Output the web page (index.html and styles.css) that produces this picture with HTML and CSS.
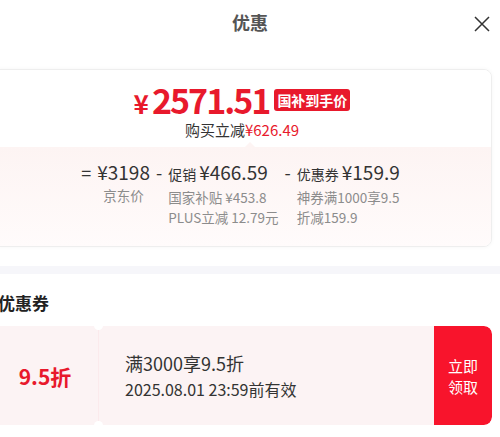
FILE: index.html
```html
<!DOCTYPE html>
<html lang="zh-CN">
<head>
    <meta charset="UTF-8">
    <title>优惠</title>
    <link rel="stylesheet" href="styles.css">
</head>
<body>
    <div class="header">
        <h1 class="title">优惠</h1>
        <span class="close">
            <svg width="18" height="18" viewBox="0 0 18 18"><path d="M2 2L16 16M16 2L2 16" stroke="#333" stroke-width="1.5" fill="none"/></svg>
        </span>
    </div>

    <div class="content">
        <div class="card">
            <div class="card-top">
                <div class="price-line">
                    <span class="price"><span class="yen">¥</span>2571.51</span>
                    <span class="tag">国补到手价</span>
                </div>
                <div class="save">购买立减<span class="red">¥626.49</span></div>
            </div>
            <div class="card-bottom">
                <div class="calc">
                    <span class="op">=</span>
                    <div class="col col-center">
                        <div class="main">¥3198</div>
                        <div class="sub">京东价</div>
                    </div>
                    <span class="op">-</span>
                    <div class="col">
                        <div class="main"><span class="label">促销</span>¥466.59</div>
                        <div class="sub">国家补贴 ¥453.8</div>
                        <div class="sub">PLUS立减 12.79元</div>
                    </div>
                    <span class="op">-</span>
                    <div class="col">
                        <div class="main"><span class="label">优惠券</span>¥159.9</div>
                        <div class="sub">神券满1000享9.5</div>
                        <div class="sub">折减159.9</div>
                    </div>
                </div>
            </div>
        </div>
    </div>

    <div class="divider"></div>

    <div class="content">
        <h2 class="section-title">优惠券</h2>
        <div class="coupon">
            <div class="coupon-value">9.5折</div>
            <div class="coupon-info">
                <div class="coupon-name">满3000享9.5折</div>
                <div class="coupon-date">2025.08.01 23:59前有效</div>
            </div>
            <button class="coupon-btn">立即<br>领取</button>
        </div>
    </div>
</body>
</html>
```

FILE: styles.css
```css
/*--base-------------------------------------------------------------*/
html, body {
    margin: 0;
    padding: 0;
    background: #fff;
}
body {
    width: 500px;
    overflow: hidden;
    font-family: "Noto Sans CJK SC", "Noto Sans", sans-serif;
    color: #333;
}

.header {
    position: relative;
    height: 44px;
    display: flex;
    align-items: center;
    justify-content: center;
}
.title {
    margin: 0;
    font-size: 18px;
    font-weight: 700;
    color: #555;
}
.close {
    position: absolute;
    right: 9px;
    top: 15px;
    display: flex;
}

.content {
    margin: 0 8px 0 -8px;
}

/*--price card-------------------------------------------------------*/
.card {
    margin-top: 25px;
    border: 1px solid #eee;
    border-radius: 8px;
    overflow: hidden;
    box-shadow: 0 0 4px rgba(0, 0, 0, 0.04);
}
.card-top {
    height: 77px;
    display: flex;
    flex-direction: column;
    align-items: center;
    padding-top: 11px;
    box-sizing: border-box;
    background: #fff;
}
.price-line {
    display: flex;
    align-items: center;
    gap: 5px;
    height: 38px;
}
.price {
    font-size: 34px;
    font-weight: 700;
    line-height: 1;
    color: #e8192c;
    letter-spacing: -2px;
}
.price .yen {
    font-size: 26px;
    margin-right: 3px;
    letter-spacing: 0;
}
.tag {
    background: #e8192c;
    color: #fff;
    font-size: 14px;
    font-weight: 700;
    line-height: 22px;
    padding: 0 3px;
    border-radius: 3px;
}
.save {
    margin-top: 1px;
    font-size: 15px;
    line-height: 20px;
    color: #333;
}
.red {
    color: #e8192c;
}

.card-bottom {
    position: relative;
    height: 99px;
    background: linear-gradient(180deg, #fdf4f3, #fffbfb);
    padding-top: 12px;
    box-sizing: border-box;
}
.card-bottom::before {
    content: "";
    position: absolute;
    left: 252px;
    top: -5px;
    border: 5px solid transparent;
    border-top: 0;
    border-bottom-color: #fdf4f3;
}
.calc {
    display: flex;
    justify-content: center;
    align-items: flex-start;
    padding-right: 9px;
}
.op {
    font-size: 18px;
    line-height: 26px;
    color: #333;
    margin: 0 6px;
}
.col .main {
    font-size: 19px;
    line-height: 26px;
    color: #333;
}
.col .label {
    font-size: 14px;
    margin-right: 3px;
}
.col .sub {
    font-size: 13.5px;
    line-height: 20px;
    color: #8c8c8c;
}
.col-center {
    text-align: center;
}

.divider {
    height: 8px;
    margin-top: 19px;
    background: #f6f6fa;
}

/*--coupon-----------------------------------------------------------*/
.section-title {
    margin: 17px 0 0 6px;
    font-size: 17px;
    font-weight: 700;
    line-height: 24px;
    color: #222;
}
.coupon {
    margin-top: 11px;
    height: 99px;
    display: flex;
    border-radius: 8px;
    overflow: hidden;
    background: #fcf3f4;
}
.coupon-value {
    position: relative;
    width: 106px;
    display: flex;
    align-items: center;
    justify-content: center;
    font-size: 21px;
    font-weight: 700;
    color: #e8192c;
    border-right: 1px solid #fbeaec;
}
.coupon-value::before,
.coupon-value::after {
    content: "";
    position: absolute;
    right: -5px;
    width: 9px;
    height: 9px;
    border-radius: 50%;
    background: #fff;
}
.coupon-value::before {
    top: -5px;
}
.coupon-value::after {
    bottom: -5px;
}
.coupon-info {
    flex: 1;
    display: flex;
    flex-direction: column;
    justify-content: center;
    padding-left: 26px;
}
.coupon-name {
    font-size: 18px;
    line-height: 26px;
    color: #333;
}
.coupon-date {
    font-size: 16px;
    line-height: 26px;
    color: #333;
}
.coupon-btn {
    width: 58px;
    border: none;
    border-radius: 0 8px 8px 0;
    background: #f8142c;
    color: #fff;
    font-family: inherit;
    font-size: 15px;
    line-height: 21px;
    padding: 0;
}
```
